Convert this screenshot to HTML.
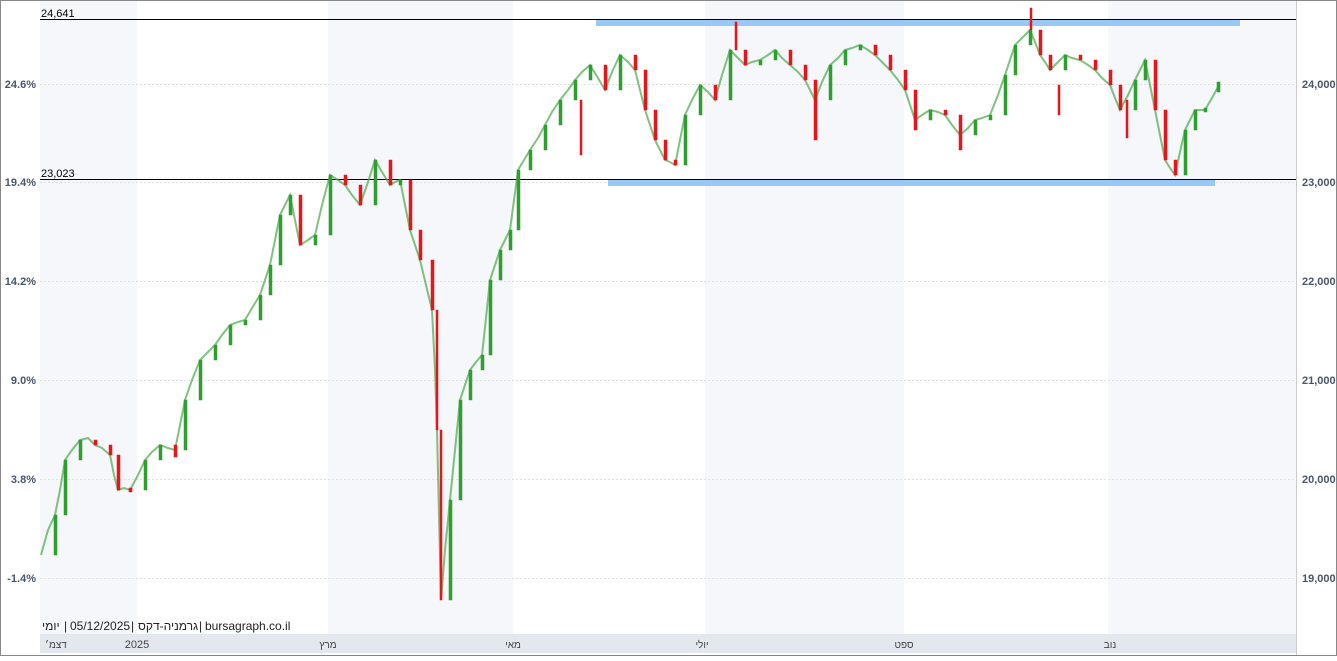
<!DOCTYPE html>
<html><head><meta charset="utf-8"><style>
html,body{margin:0;padding:0;background:#fff;}
body{width:1337px;height:656px;overflow:hidden;}
</style></head><body>
<svg width="1337" height="656" xmlns="http://www.w3.org/2000/svg" font-family="Liberation Sans, Noto Sans CJK SC, sans-serif">
<rect x="0" y="0" width="1337" height="656" fill="#fff"/>
<rect x="40" y="0" width="97" height="634" fill="#f5f7fa"/>
<rect x="328" y="0" width="185" height="634" fill="#f5f7fa"/>
<rect x="705" y="0" width="199" height="634" fill="#f5f7fa"/>
<rect x="1108" y="0" width="188" height="634" fill="#f5f7fa"/>
<g stroke="#dde1e6" stroke-dasharray="2,2">
<line x1="40" y1="84.5" x2="1296" y2="84.5"/><line x1="40" y1="182.5" x2="1296" y2="182.5"/>
<line x1="40" y1="281.5" x2="1296" y2="281.5"/><line x1="40" y1="380.5" x2="1296" y2="380.5"/>
<line x1="40" y1="479.5" x2="1296" y2="479.5"/><line x1="40" y1="578.5" x2="1296" y2="578.5"/>
</g>
<rect x="596" y="19" width="644" height="7" fill="#98c8f5"/>
<rect x="608" y="179" width="607" height="7" fill="#98c8f5"/>
<line x1="40" y1="19.5" x2="1296" y2="19.5" stroke="#000"/>
<line x1="40" y1="179.5" x2="1296" y2="179.5" stroke="#000"/>
<text x="41" y="17" font-size="11" fill="#000">24,641</text>
<text x="41" y="177" font-size="11" fill="#000">23,023</text>

<polyline fill="none" stroke="#4aa84a" stroke-width="2" stroke-opacity="0.7" points="41,555 48,530 55,515 60,490 65,460 72,450 80,440 88,438 95,445 102,448 110,455 114,475 118,490 124,488 130,490 138,475 145,460 152,452 160,445 168,448 175,450 180,425 185,400 192,380 200,360 208,352 215,345 222,335 230,325 238,322 245,320 252,308 260,295 265,280 270,265 275,240 280,215 285,205 290,195 295,220 300,245 308,240 315,235 322,205 330,175 338,180 345,185 352,195 360,205 368,182 375,160 382,172 390,185 395,182 400,180 405,205 410,230 415,245 420,260 426,285 432,310 435,370 437,430 439,515 441,600 445,550 450,500 455,450 460,400 465,385 470,370 476,362 482,355 486,318 490,280 495,265 500,250 505,240 510,230 514,200 518,170 524,160 530,150 538,138 545,125 552,112 560,100 568,90 575,80 582,72 590,65 598,78 605,90 612,72 620,55 628,62 635,70 640,90 645,110 650,125 655,140 660,150 665,160 670,162 675,165 680,140 685,115 692,100 700,85 708,92 715,100 722,75 730,50 738,58 745,65 752,62 760,60 768,55 775,50 782,58 790,65 798,72 805,80 810,90 815,100 822,82 830,65 838,58 845,50 852,48 860,45 868,50 875,55 882,62 890,70 898,80 905,90 910,105 915,120 922,115 930,110 938,112 945,115 952,125 960,135 968,128 975,120 982,118 990,115 998,95 1005,75 1010,60 1015,45 1022,38 1030,30 1035,42 1040,55 1045,62 1050,70 1058,62 1065,55 1072,58 1080,60 1088,65 1095,70 1102,78 1110,85 1115,98 1120,110 1128,95 1135,80 1140,70 1145,60 1150,85 1155,110 1160,135 1165,160 1170,168 1175,175 1180,152 1185,130 1190,120 1195,110 1200,110 1205,110 1212,98 1218,87"/>

<g fill="#2e9e2e" stroke="#2e9e2e" stroke-width="0.5">
<rect x="54" y="515" width="3" height="40"/><rect x="64" y="460" width="3" height="55"/><rect x="79" y="440" width="3" height="20"/>
<rect x="144" y="460" width="3" height="30"/><rect x="159" y="445" width="3" height="15"/><rect x="184" y="400" width="3" height="50"/>
<rect x="199" y="360" width="3" height="40"/><rect x="214" y="345" width="3" height="15"/><rect x="229" y="325" width="3" height="20"/>
<rect x="244" y="320" width="3" height="5"/><rect x="259" y="295" width="3" height="25"/><rect x="269" y="265" width="3" height="30"/>
<rect x="279" y="215" width="3" height="50"/><rect x="289" y="195" width="3" height="20"/><rect x="314" y="235" width="3" height="10"/>
<rect x="329" y="175" width="3" height="60"/><rect x="374" y="160" width="3" height="45"/><rect x="399" y="180" width="3" height="5"/>
<rect x="449" y="500" width="3" height="100"/><rect x="459" y="400" width="3" height="100"/><rect x="469" y="370" width="3" height="30"/>
<rect x="481" y="355" width="3" height="15"/><rect x="489" y="280" width="3" height="75"/><rect x="499" y="250" width="3" height="30"/>
<rect x="509" y="230" width="3" height="20"/><rect x="517" y="170" width="3" height="60"/><rect x="529" y="150" width="3" height="20"/>
<rect x="544" y="125" width="3" height="25"/><rect x="559" y="100" width="3" height="25"/><rect x="574" y="80" width="3" height="20"/>
<rect x="589" y="65" width="3" height="15"/><rect x="619" y="55" width="3" height="35"/><rect x="684" y="115" width="3" height="50"/>
<rect x="699" y="85" width="3" height="30"/><rect x="729" y="50" width="3" height="50"/><rect x="759" y="60" width="3" height="5"/>
<rect x="774" y="50" width="3" height="10"/><rect x="829" y="65" width="3" height="35"/><rect x="844" y="50" width="3" height="15"/>
<rect x="859" y="45" width="3" height="5"/><rect x="929" y="110" width="3" height="10"/><rect x="974" y="120" width="3" height="15"/>
<rect x="989" y="115" width="3" height="5"/><rect x="1004" y="75" width="3" height="40"/><rect x="1014" y="45" width="3" height="30"/>
<rect x="1029" y="30" width="3" height="15"/><rect x="1064" y="55" width="3" height="15"/><rect x="1134" y="80" width="3" height="30"/>
<rect x="1144" y="60" width="3" height="20"/><rect x="1184" y="130" width="3" height="45"/><rect x="1194" y="110" width="3" height="20"/>
<rect x="1204" y="108" width="3" height="4"/><rect x="1217" y="82" width="3" height="10"/>
</g>
<g fill="#e8141c" stroke="#e8141c" stroke-width="0.5">
<rect x="94" y="440" width="3" height="5"/><rect x="109" y="445" width="3" height="10"/><rect x="117" y="455" width="3" height="35"/>
<rect x="129" y="488" width="3" height="4"/><rect x="174" y="445" width="3" height="12"/><rect x="299" y="195" width="3" height="50"/>
<rect x="344" y="175" width="3" height="10"/><rect x="359" y="185" width="3" height="20"/><rect x="389" y="160" width="3" height="25"/>
<rect x="409" y="180" width="3" height="50"/><rect x="419" y="230" width="3" height="30"/><rect x="431" y="260" width="3" height="50"/>
<rect x="436" y="310" width="2" height="120"/><rect x="440" y="430" width="2" height="170"/><rect x="604" y="65" width="3" height="25"/>
<rect x="634" y="55" width="3" height="15"/><rect x="644" y="70" width="3" height="40"/><rect x="654" y="110" width="3" height="30"/>
<rect x="664" y="140" width="3" height="20"/><rect x="674" y="160" width="3" height="5"/><rect x="714" y="85" width="3" height="15"/>
<rect x="744" y="50" width="3" height="15"/><rect x="789" y="50" width="3" height="15"/><rect x="804" y="65" width="3" height="15"/>
<rect x="814" y="80" width="3" height="60"/><rect x="874" y="45" width="3" height="10"/><rect x="889" y="55" width="3" height="15"/>
<rect x="904" y="70" width="3" height="20"/><rect x="914" y="90" width="3" height="40"/><rect x="944" y="110" width="3" height="5"/>
<rect x="959" y="115" width="3" height="35"/><rect x="1039" y="30" width="3" height="25"/><rect x="1049" y="55" width="3" height="15"/>
<rect x="1079" y="55" width="3" height="5"/><rect x="1094" y="60" width="3" height="10"/><rect x="1109" y="70" width="3" height="15"/>
<rect x="1119" y="85" width="3" height="25"/><rect x="1154" y="60" width="3" height="50"/><rect x="1164" y="110" width="3" height="50"/>
<rect x="1174" y="160" width="3" height="15"/><rect x="1030" y="8" width="2" height="22"/><rect x="735" y="22" width="2" height="28"/>
<rect x="580" y="100" width="2" height="55"/><rect x="1058" y="85" width="2" height="30"/><rect x="1126" y="100" width="2" height="38"/>
</g>

<rect x="40" y="634" width="1256" height="19" fill="#e3e7ee"/>
<g font-size="10" fill="#444" text-anchor="middle">
<text x="56" y="648">דצמ׳</text><text x="137" y="648" font-size="11">2025</text><text x="328" y="648">מרץ</text>
<text x="513" y="648">מאי</text><text x="702" y="648">יולי</text><text x="904" y="648">ספט</text><text x="1110" y="648">נוב</text>
</g>
<g font-size="12" fill="#222">
<text x="42" y="630">יומי</text>
<text x="64" y="630">|</text>
<text x="70" y="630">05/12/2025</text>
<text x="131" y="630">|</text>
<text x="138" y="630">גרמניה-דקס</text>
<text x="199" y="630">|</text>
<text x="205" y="630">bursagraph.co.il</text>
</g>
<g font-size="11" fill="#4a5568" font-weight="bold" text-anchor="end">
<text x="36" y="88">24.6%</text><text x="36" y="186">19.4%</text><text x="36" y="285">14.2%</text>
<text x="36" y="384">9.0%</text><text x="36" y="483">3.8%</text><text x="36" y="582">-1.4%</text>
</g>
<g font-size="11" fill="#4a5568" font-weight="bold">
<text x="1302" y="88">24,000</text><text x="1302" y="186">23,000</text><text x="1302" y="285">22,000</text>
<text x="1302" y="384">21,000</text><text x="1302" y="483">20,000</text><text x="1302" y="582">19,000</text>
</g>
<line x1="1296.5" y1="0" x2="1296.5" y2="656" stroke="#ccc"/>
<rect x="0.5" y="0.5" width="1336" height="655" fill="none" stroke="#888"/>
</svg>
</body></html>
